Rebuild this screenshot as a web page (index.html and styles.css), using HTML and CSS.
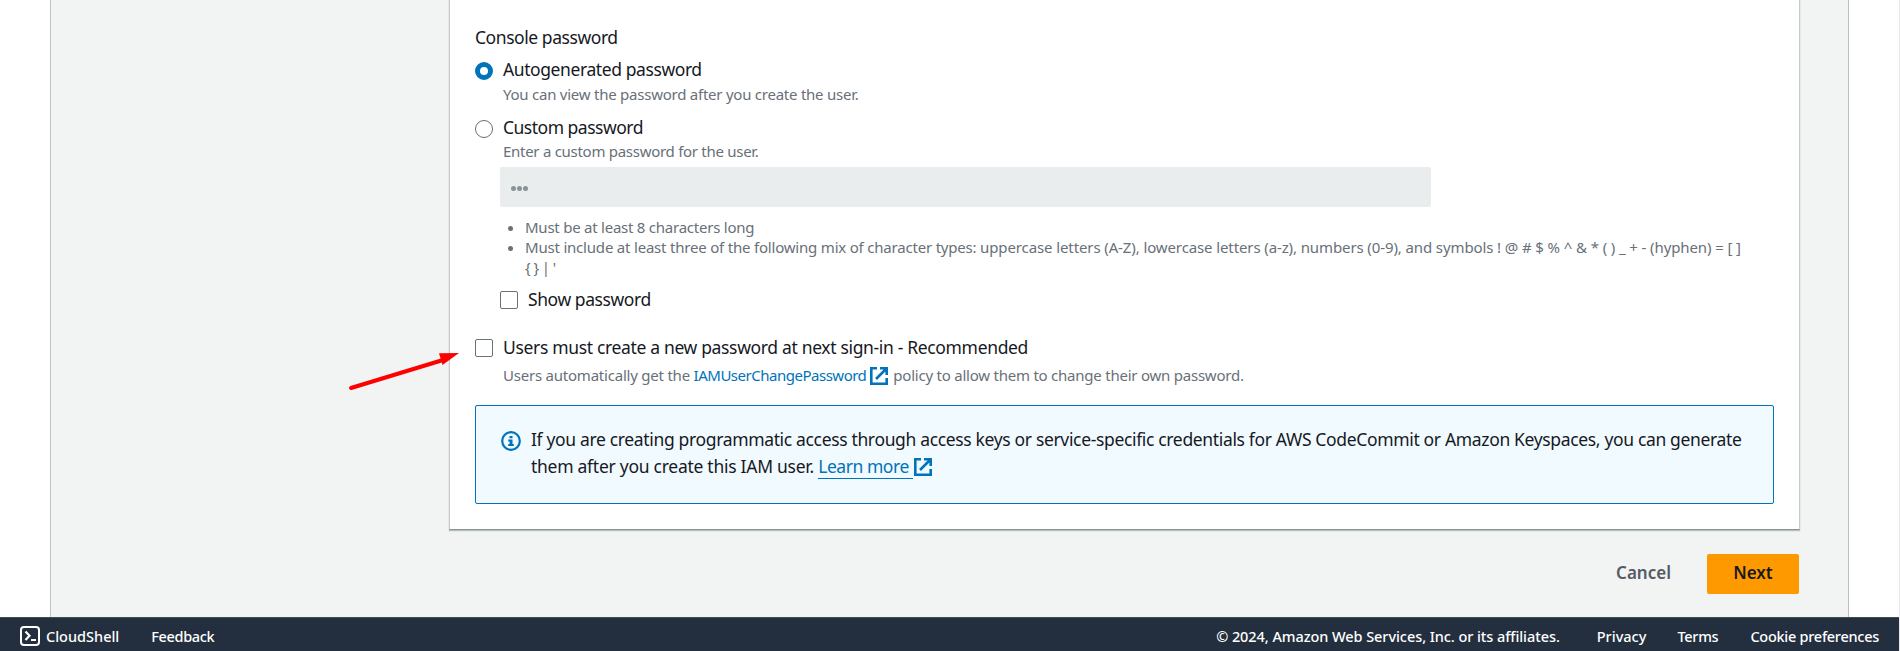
FILE: index.html
```html
<!DOCTYPE html>
<html lang="en">
<head>
<meta charset="utf-8">
<title>Create user</title>
<link rel="stylesheet" href="styles.css">
</head>
<body>
<svg class="defs" aria-hidden="true">
  <symbol id="external" viewBox="0 0 18 18"><path d="M7 1.3H1.300v15.400h15.400V11M10 1.300h6.700V8M16 2L6 12" fill="none" stroke="currentColor" stroke-width="2.6"/></symbol>
</svg>
<div class="page">
  <main class="main">
    <section class="panel">
      <div class="title t-console">Console password</div>
      <div class="option first">
        <span class="radio checked"></span>
        <div><div class="title t-auto">Autogenerated password</div><div class="hint h-auto">You can view the password after you create the user.</div></div>
      </div>
      <div class="option second">
        <span class="radio"></span>
        <div><div class="title t-custom">Custom password</div><div class="hint h-custom">Enter a custom password for the user.</div></div>
      </div>
      <div class="input"><i></i><i></i><i></i></div>
      <ul class="rules">
        <li><span class="r-one">Must be at least 8 characters long</span></li>
        <li><span class="r-types">Must include at least three of the following mix of character types: </span><span class="r-two">uppercase letters (A-Z), lowercase letters (a-z), numbers (0-9), and symbols ! @ # $ % ^ &amp; * ( ) _ + - (hyphen) = [ ]</span><br><span class="r-three">{ } | '</span></li>
      </ul>
      <div class="check show"><span class="box"></span><span class="title t-show">Show password</span></div>
      <div class="check must"><span class="box"></span><span class="title t-must">Users must create a new password at next sign-in - Recommended</span></div>
      <div class="hint policy"><span class="p-one">Users automatically get the </span><a class="p-link">IAMUserChangePassword</a><svg class="ext"><use href="#external"/></svg><span class="p-two">policy to allow them to change their own password.</span></div>
      <div class="info">
        <svg class="info-icon" viewBox="0 0 20 20"><circle cx="10" cy="10" r="8.800" fill="none" stroke="currentColor" stroke-width="2.200"/><path d="M8.500 5h3v2.200h-3zM7.200 8.500h4.300v4.500h1.300v2H7.200v-2h1.400v-2.600H7.200z" fill="currentColor"/></svg>
        <div class="info-text">
          <div class="i-one">If you are creating programmatic access through access keys or service-specific credentials for AWS CodeCommit or Amazon Keyspaces, you can generate</div>
          <div class="i-row"><span class="i-two">them after you create this IAM user. </span><a class="learn">Learn more</a><svg class="ext"><use href="#external"/></svg></div>
        </div>
      </div>
    </section>
    <div class="actions"><span class="cancel">Cancel</span><span class="next">Next</span></div>
  </main>
  <footer class="footer">
    <svg class="shell" viewBox="0 0 20 20"><rect x="1" y="1" width="18" height="18" rx="3" fill="none" stroke="#fff" stroke-width="2"/><path d="M5.500 5.500l4 4.200-4 4.200M11 14h5" fill="none" stroke="#fff" stroke-width="2.200"/></svg>
    <span class="f-shell">CloudShell</span><span class="f-feedback">Feedback</span>
    <span class="f-copy">© 2024, Amazon Web Services, Inc. or its affiliates.</span>
    <span class="f-privacy">Privacy</span><span class="f-terms">Terms</span><span class="f-cookie">Cookie preferences</span>
  </footer>
  <svg class="arrow" viewBox="0 0 112 42"><path d="M3 38L95 10" stroke="#f00" stroke-width="4" stroke-linecap="round"/><path d="M111 3L91 3.200 94.500 15z" fill="#f00"/></svg>
</div>
</body>
</html>
```
FILE: styles.css
```css
* { box-sizing: border-box; }
body { margin: 0; background: #fff; font-family: "Noto Sans", sans-serif; font-size: 15px; color: #16191f; }
.defs { position: absolute; width: 0; height: 0; }
.page { position: relative; width: 1900px; height: 651px; overflow: hidden; display: flex; flex-direction: column; border-right: 1px solid #e8e8ea; }
.main { width: 1799px; height: 617px; margin-left: 50px; padding: 0 49px 0 398px; background: #f2f3f3; border-left: 1px solid #bcc3c3; border-right: 1px solid #bcbec0; }
.panel { width: 1351px; height: 530px; padding: 24px 25px 0; background: #fff; border-left: 1px solid #c4c9c9; border-right: 1px solid #c4c9c9; border-bottom: 1px solid #879596; box-shadow: 0 1px 1px rgba(0,28,36,.25); }
.title { font-size: 17.5px; line-height: 26px; white-space: nowrap; }
.hint { color: #687078; line-height: 20px; white-space: nowrap; }
.t-console { letter-spacing: -.44px; }
.t-auto { letter-spacing: -.41px; }
.t-custom { letter-spacing: -.5px; }
.t-show { letter-spacing: -.42px; }
.t-must { letter-spacing: -.34px; }
.h-auto, .r-one { letter-spacing: -.24px; }
.h-custom { letter-spacing: -.28px; }
.r-types { letter-spacing: -.2px; white-space: pre; }
.r-two { letter-spacing: -.11px; }
.r-three { letter-spacing: -.6px; }
.p-one { letter-spacing: -.22px; }
.p-link { letter-spacing: -.49px; }
.p-two { letter-spacing: -.23px; }
.i-one { letter-spacing: -.345px; }
.i-two { letter-spacing: -.27px; white-space: pre; }
.option { display: flex; gap: 10px; }
.first { margin-top: 6px; }
.first .hint { margin-top: 2px; }
.second { margin-top: 10px; }
.second .hint { margin-top: 1px; }
.radio { width: 18px; height: 18px; margin-top: 6px; border: 1px solid #687078; border-radius: 50%; }
.checked { border: 5px solid #0073bb; }
.input { display: flex; align-items: center; gap: 1px; width: 931px; height: 40px; margin: 6px 0 0 25px; padding: 3px 0 0 11px; background: #e9eded; border-radius: 2px; }
.input i { width: 5px; height: 5px; border-radius: 50%; background: #879596; }
.rules { margin: 10px 0 0 25px; padding-left: 25px; line-height: 20px; color: #687078; white-space: nowrap; }
.check { display: flex; align-items: center; gap: 10px; }
.box { width: 18px; height: 18px; border: 1px solid #687078; border-radius: 2px; margin-top: 2px; }
.show { margin: 9px 0 0 25px; }
.must { margin-top: 22px; }
.policy { display: flex; align-items: center; margin: 5px 0 0 28px; white-space: pre; }
.ext { width: 18px; height: 18px; color: #0073bb; flex: none; }
.policy .ext { margin: 1px 5px 0 4px; }
a { color: #0073bb; }
.info { display: flex; width: 1299px; height: 99px; margin-top: 20px; padding: 20px 0 0 25px; border: 1px solid #0073bb; border-radius: 2px; background: #f1faff; }
.info-icon { flex: none; width: 20px; height: 20px; margin-top: 5px; color: #0073bb; }
.info-text { margin-left: 10px; font-size: 17.5px; line-height: 27px; white-space: nowrap; }
.i-row { display: flex; align-items: center; }
.learn { width: 95px; height: 25px; line-height: 25px; letter-spacing: -.45px; border-bottom: 1px solid #0073bb; }
.i-row .ext { margin: 1px 0 0 1px; }
.actions { display: flex; justify-content: flex-end; align-items: center; margin-top: 24px; font-size: 17px; font-weight: 600; }
.cancel { margin-right: 36px; padding-bottom: 3px; color: #545b64; }
.next { display: grid; place-items: center; width: 92px; height: 40px; padding-bottom: 3px; background: #f90; border-radius: 2px; }
.footer { display: flex; align-items: center; height: 34px; padding: 3px 20px 0; background: #232f3e; border-top: 1px solid #414d55; color: #fff; font-weight: 500; font-size: 14.5px; white-space: nowrap; }
.shell { width: 20px; height: 20px; margin-right: 6px; }
.f-feedback { margin-left: 32px; letter-spacing: -.35px; }
.f-copy { margin-left: auto; letter-spacing: -.07px; }
.f-privacy { margin-left: 37px; }
.f-terms { margin-left: 31px; letter-spacing: -.27px; }
.f-cookie { margin-left: 32px; letter-spacing: -.27px; }
.arrow { position: absolute; left: 348px; top: 350px; width: 112px; height: 42px; }
```
